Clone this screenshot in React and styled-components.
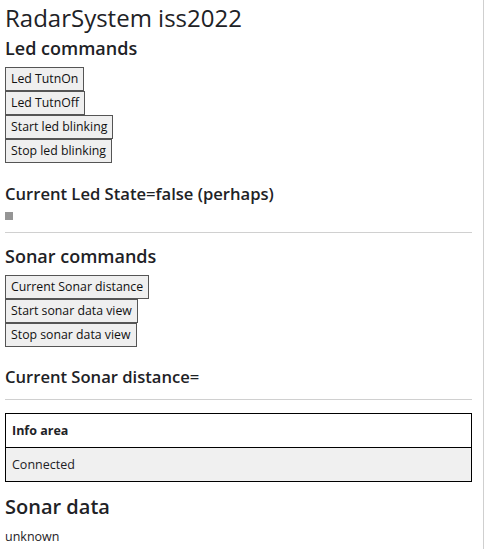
import React from 'react'
import styled, { createGlobalStyle } from 'styled-components'

const Global = createGlobalStyle`
  html, body { margin: 0; padding: 0; background: #fff; }
  body { font-family: "Open Sans", "Noto Sans", sans-serif; color: #1e2226; }
`

const Page = styled.div`
  box-sizing: border-box;
  width: 484px;
  min-height: 549px;
  padding: 0 11px 0 5px;
  border-right: 1px solid #cfcfcf;
  display: flex;
  flex-direction: column;
`

const Title = styled.h1`
  font-size: 24px;
  font-weight: 500;
  line-height: 30px;
  margin: 3px 0 0;
`

const Section = styled.h2`
  font-size: 18px;
  font-weight: 600;
  line-height: 24px;
  margin: ${({ $top }) => $top || 3}px 0 7px;
`

const Status = styled.h3`
  font-size: 16.6px;
  font-weight: 600;
  line-height: 22px;
  margin: ${({ $top }) => $top || 20}px 0 4px;
`

const Buttons = styled.div`
  display: flex;
  flex-direction: column;
  align-items: flex-start;
`

const Button = styled.button`
  font-family: "Open Sans", sans-serif;
  font-size: 12.3px;
  line-height: 20px;
  height: 24px;
  padding: 0 5px;
  background: #efefef;
  border: 1px solid #555;
  color: #111;
  border-radius: 0;
  margin: 0;
`

const Led = styled.div`
  width: 8px;
  height: 8px;
  background: #959595;
  margin-top: 3px;
`

const Rule = styled.hr`
  border: none;
  border-top: 1px solid #d0d0d0;
  margin: ${({ $top }) => $top}px 0 0;
  width: 100%;
`

const Info = styled.div`
  margin-top: 13px;
  border: 1px solid #000;
  display: flex;
  flex-direction: column;
`

const InfoRow = styled.div`
  height: 33px;
  display: flex;
  align-items: center;
  padding: 0 6px;
  font-size: 12.5px;
  font-weight: ${({ $head }) => ($head ? 700 : 400)};
  background: ${({ $head }) => ($head ? '#fff' : '#f0f0f0')};
  border-top: ${({ $head }) => ($head ? 'none' : '1px solid #000')};
`

const Data = styled.h2`
  font-size: 20px;
  font-weight: 600;
  line-height: 26px;
  margin: 12px 0 9px;
`

const Plain = styled.div`
  font-size: 12.5px;
  line-height: 16px;
`

export default function App() {
  return (
    <>
      <Global />
      <Page>
        <Title>RadarSystem iss2022</Title>
        <Section>Led commands</Section>
        <Buttons>
          <Button>Led TutnOn</Button>
          <Button>Led TutnOff</Button>
          <Button>Start led blinking</Button>
          <Button>Stop led blinking</Button>
        </Buttons>
        <Status>Current Led State=false (perhaps)</Status>
        <Led />
        <Rule $top={12} />
        <Section $top={11}>Sonar commands</Section>
        <Buttons>
          <Button>Current Sonar distance</Button>
          <Button>Start sonar data view</Button>
          <Button>Stop sonar data view</Button>
        </Buttons>
        <Status $top={19}>Current Sonar distance=</Status>
        <Rule $top={7} />
        <Info>
          <InfoRow $head>Info area</InfoRow>
          <InfoRow>Connected</InfoRow>
        </Info>
        <Data>Sonar data</Data>
        <Plain>unknown</Plain>
      </Page>
    </>
  )
}
